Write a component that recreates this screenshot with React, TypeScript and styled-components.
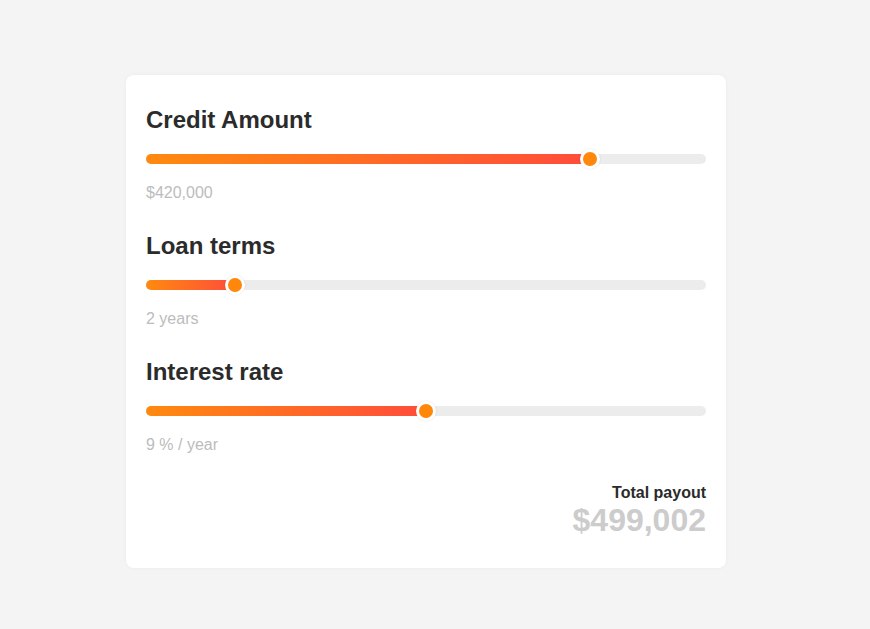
import React from "react";
import styled, { createGlobalStyle } from "styled-components";

const Global = createGlobalStyle`
  html, body { margin: 0; padding: 0; background: #f4f4f4; }
  body { font-family: "Liberation Sans", Arial, sans-serif; }
`;

const Page = styled.div`
  min-height: 629px;
  padding: 75px 0 0 126px;
  box-sizing: border-box;
`;

const Card = styled.div`
  width: 600px;
  box-sizing: border-box;
  background: #fff;
  border-radius: 8px;
  box-shadow: 0 0 4px rgba(0, 0, 0, 0.04);
  padding: 32px 20px 30px;
  display: flex;
  flex-direction: column;
`;

const Section = styled.div`
  display: flex;
  flex-direction: column;
  margin-bottom: 31px;
`;

const Title = styled.div`
  font-size: 24px;
  line-height: 26px;
  font-weight: 700;
  color: #2b2b2b;
`;

const SliderWrap = styled.div`
  position: relative;
  height: 20px;
  margin-top: 16px;
  display: flex;
  align-items: center;
`;

const Track = styled.div`
  width: 100%;
  height: 10px;
  border-radius: 5px;
  background: #ececec;
  position: relative;
`;

const Fill = styled.div`
  height: 100%;
  border-radius: 5px;
  background: linear-gradient(90deg, #ff8a0f 0%, #ff4c3b 100%);
`;

const Thumb = styled.div`
  position: absolute;
  top: 0;
  width: 20px;
  height: 20px;
  margin-left: -10px;
  box-sizing: border-box;
  border-radius: 50%;
  border: 3px solid #fff;
  background: #ff870a;
  box-shadow: 0 0 2px rgba(0, 0, 0, 0.12);
`;

const Value = styled.div`
  margin-top: 15px;
  font-size: 16px;
  line-height: 18px;
  color: #bcbcbc;
`;

const Total = styled.div`
  display: flex;
  flex-direction: column;
  align-items: flex-end;
  margin-top: -1px;
`;

const TotalLabel = styled.div`
  font-size: 16px;
  line-height: 18px;
  font-weight: 700;
  color: #2b2b2b;
`;

const TotalValue = styled.div`
  font-size: 32px;
  line-height: 36px;
  font-weight: 700;
  color: #cccccc;
`;

type SliderProps = { title: string; value: string; pct: number };

const SliderBlock = ({ title, value, pct }: SliderProps) => (
  <Section>
    <Title>{title}</Title>
    <SliderWrap>
      <Track>
        <Fill style={{ width: `${pct}%` }} />
      </Track>
      <Thumb style={{ left: `${pct}%` }} />
    </SliderWrap>
    <Value>{value}</Value>
  </Section>
);

export default function App() {
  return (
    <>
      <Global />
      <Page>
        <Card>
          <SliderBlock title="Credit Amount" value="$420,000" pct={79.3} />
          <SliderBlock title="Loan terms" value="2 years" pct={15.9} />
          <SliderBlock title="Interest rate" value="9 % / year" pct={50} />
          <Total>
            <TotalLabel>Total payout</TotalLabel>
            <TotalValue>$499,002</TotalValue>
          </Total>
        </Card>
      </Page>
    </>
  );
}
